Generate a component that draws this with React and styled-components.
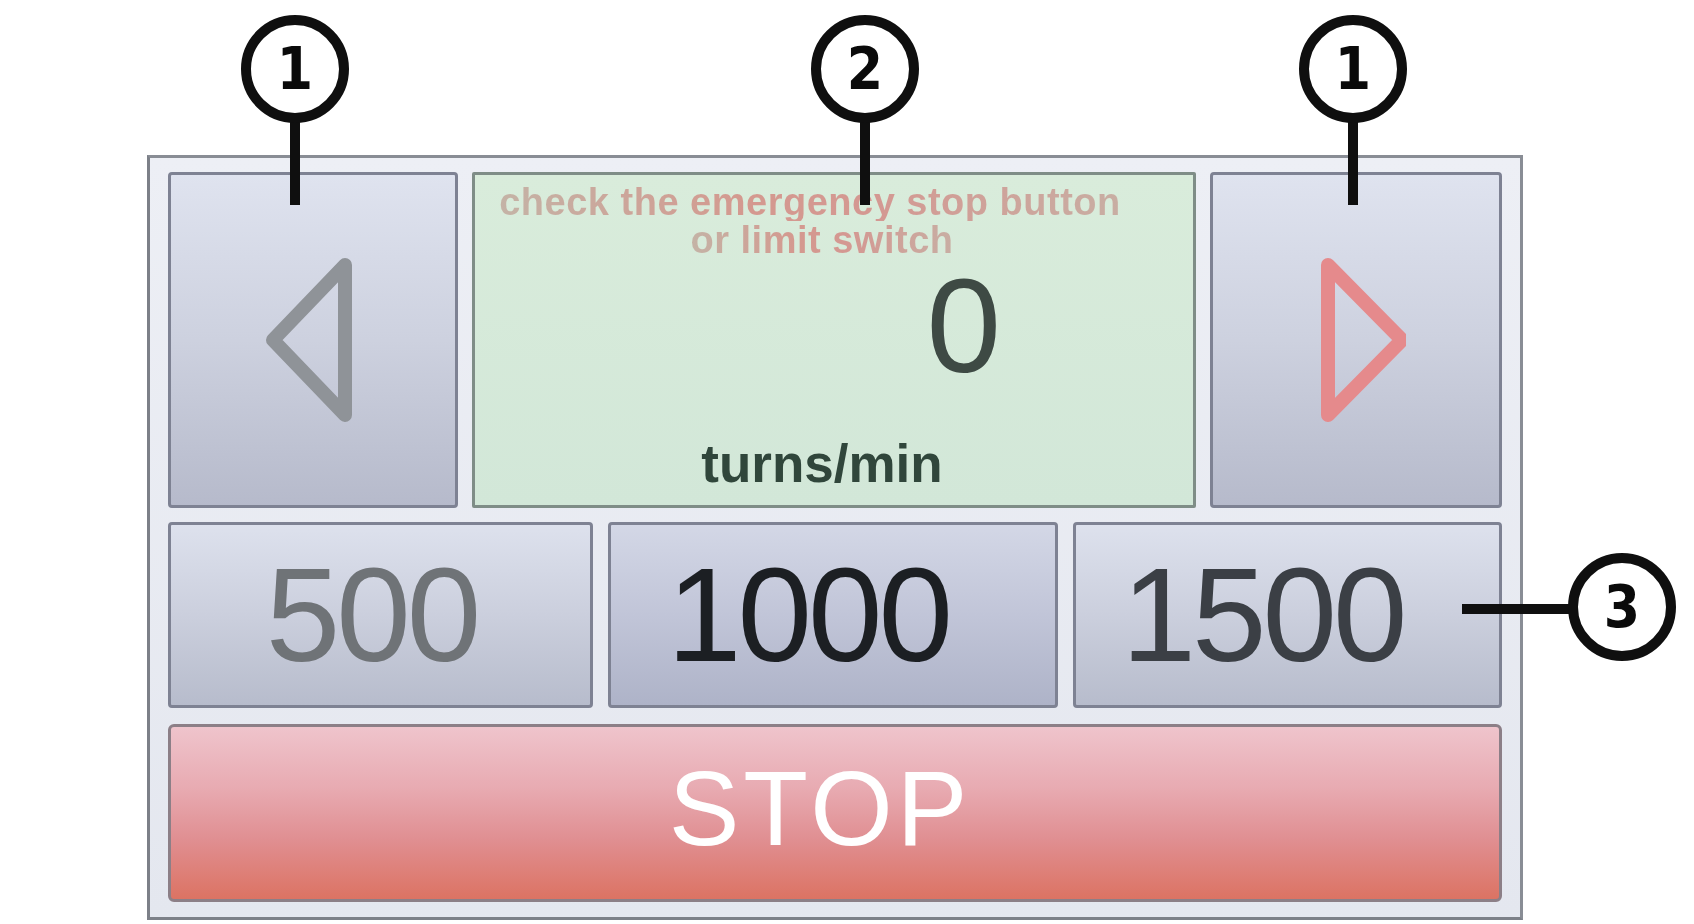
import React from "react";
import styled, { createGlobalStyle, css } from "styled-components";

const GlobalStyle = createGlobalStyle`
  html, body {
    margin: 0;
    padding: 0;
    background: #ffffff;
  }
  body {
    font-family: "Liberation Sans", Arial, sans-serif;
  }
  * {
    box-sizing: border-box;
  }
`;

const callouts = [
    { label: "1", x: 295, y: 69, leader: "down" },
    { label: "2", x: 865, y: 69, leader: "down" },
    { label: "1", x: 1353, y: 69, leader: "down" },
    { label: "3", x: 1622, y: 607, leader: "left" },
];

const presets = [
    { value: "500", tone: "#6f7377", pad: 18 },
    { value: "1000", tone: "#1c1f23", pad: 50 },
    { value: "1500", tone: "#3b3f45", pad: 50 },
];

function Arrow({ dir, color }) {
    const points = dir === "left" ? "82,10 10,85 82,160" : "22,10 96,85 22,160";
    return (
        <svg width="100" height="170" viewBox="0 0 100 170">
            <polygon
                points={points}
                fill="none"
                stroke={color}
                strokeWidth="14"
                strokeLinejoin="round"
            />
        </svg>
    );
}

function Callout({ label, x, y, leader }) {
    return (
        <>
            {leader === "down" ? (
                <Leader $x={x - 5} $y={y + 45} $w={10} $h={205 - y - 45} />
            ) : (
                <Leader $x={1462} $y={y - 3} $w={x - 1462 - 45} $h={10} />
            )}
            <Badge $x={x} $y={y}>
                {label}
            </Badge>
        </>
    );
}

function App() {
    return (
        <>
            <GlobalStyle />
            <Stage>
                <Panel>
                    <TopRow>
                        <ArrowButton>
                            <Arrow dir="left" color="#8f9398" />
                        </ArrowButton>
                        <Display>
                            <MessageLine $shift={24}>check the emergency stop button</MessageLine>
                            <MessageLine $shift={0}>or limit switch</MessageLine>
                            <Value>0</Value>
                            <Unit>turns/min</Unit>
                        </Display>
                        <ArrowButton>
                            <Arrow dir="right" color="#e58a8c" />
                        </ArrowButton>
                    </TopRow>
                    <PresetRow>
                        {presets.map((p) => (
                            <Preset
                                key={p.value}
                                $tone={p.tone}
                                $pad={p.pad}
                                $mid={p.value === "1000"}
                            >
                                {p.value}
                            </Preset>
                        ))}
                    </PresetRow>
                    <StopButton>STOP</StopButton>
                </Panel>
                {callouts.map((c, i) => (
                    <Callout key={i} {...c} />
                ))}
            </Stage>
        </>
    );
}

const raised = css`
    border: 3px solid #7e8293;
    border-radius: 4px;
    background: linear-gradient(180deg, #dfe3ef 0%, #cdd1df 50%, #b6bacb 100%);
    display: flex;
    align-items: center;
    justify-content: center;
    font-family: inherit;
    padding: 0;
    margin: 0;
`;

const Stage = styled.div`
    position: relative;
    width: 1694px;
    height: 924px;
    padding: 155px 0 0 147px;
    overflow: hidden;
`;

const Panel = styled.div`
    width: 1376px;
    height: 765px;
    border: 3px solid #898d95;
    border-left-color: #7c8088;
    border-bottom-color: #7c8088;
    background: linear-gradient(180deg, #edeff5 0%, #e4e7ef 100%);
    padding: 14px 18px 15px 18px;
    display: flex;
    flex-direction: column;
`;

const TopRow = styled.div`
    display: grid;
    grid-template-columns: 290px 724px 292px;
    gap: 14px;
    height: 336px;
`;

const ArrowButton = styled.div`
    ${raised};
`;

const Display = styled.div`
    display: flex;
    flex-direction: column;
    border: 3px solid #7f8d87;
    border-radius: 2px;
    background: linear-gradient(180deg, #d9ecdb 0%, #d2e7d8 100%);
    padding: 8px 24px 15px 0;
`;

const MessageLine = styled.div`
    align-self: center;
    margin-right: ${(p) => p.$shift}px;
    font-weight: 700;
    font-size: 38px;
    line-height: 38px;
    letter-spacing: 0.5px;
    white-space: nowrap;
    background: linear-gradient(90deg, #c4b3a6 0%, #d4998f 40%, #d49892 60%, #c8aea3 100%);
    -webkit-background-clip: text;
    background-clip: text;
    color: transparent;
`;

const Value = styled.div`
    font-size: 134px;
    line-height: 134px;
    text-align: right;
    padding-right: 168px;
    color: #3e4a44;
`;

const Unit = styled.div`
    margin-top: auto;
    font-weight: 700;
    font-size: 53px;
    line-height: 53px;
    text-align: center;
    color: #30463b;
`;

const PresetRow = styled.div`
    display: grid;
    grid-template-columns: 425px 450px 429px;
    gap: 15px;
    height: 186px;
    margin-top: 14px;
`;

const Preset = styled.div`
    ${raised};
    background: ${(p) =>
        p.$mid
            ? "linear-gradient(180deg, #d3d7e6 0%, #c1c5d8 50%, #aeb3c8 100%)"
            : "linear-gradient(180deg, #dde1ed 0%, #cbcfdd 50%, #b7bccc 100%)"};
    font-size: 134px;
    line-height: 1;
    letter-spacing: -4px;
    color: ${(p) => p.$tone};
    padding-right: ${(p) => p.$pad}px;
`;

const StopButton = styled.div`
    margin-top: 16px;
    height: 178px;
    border: 3px solid #8c7f87;
    border-radius: 6px;
    background: linear-gradient(180deg, #efc4cc 0%, #e8abb2 35%, #e08f92 65%, #dc7363 100%);
    display: flex;
    align-items: center;
    justify-content: center;
    color: #ffffff;
    font-size: 106px;
    line-height: 1;
    letter-spacing: 4px;
    padding: 0 30px 10px 0;
`;

const Badge = styled.div`
    position: absolute;
    left: ${(p) => p.$x - 54}px;
    top: ${(p) => p.$y - 54}px;
    width: 108px;
    height: 108px;
    border: 10px solid #0f0f0f;
    border-radius: 50%;
    background: #ffffff;
    display: flex;
    align-items: center;
    justify-content: center;
    font-family: "DejaVu Sans Condensed", "DejaVu Sans", sans-serif;
    font-stretch: condensed;
    font-weight: 700;
    font-size: 58px;
    line-height: 1;
    color: #0a0a0a;
`;

const Leader = styled.div`
    position: absolute;
    left: ${(p) => p.$x}px;
    top: ${(p) => p.$y}px;
    width: ${(p) => p.$w}px;
    height: ${(p) => p.$h}px;
    background: #0f0f0f;
`;

export default App;
